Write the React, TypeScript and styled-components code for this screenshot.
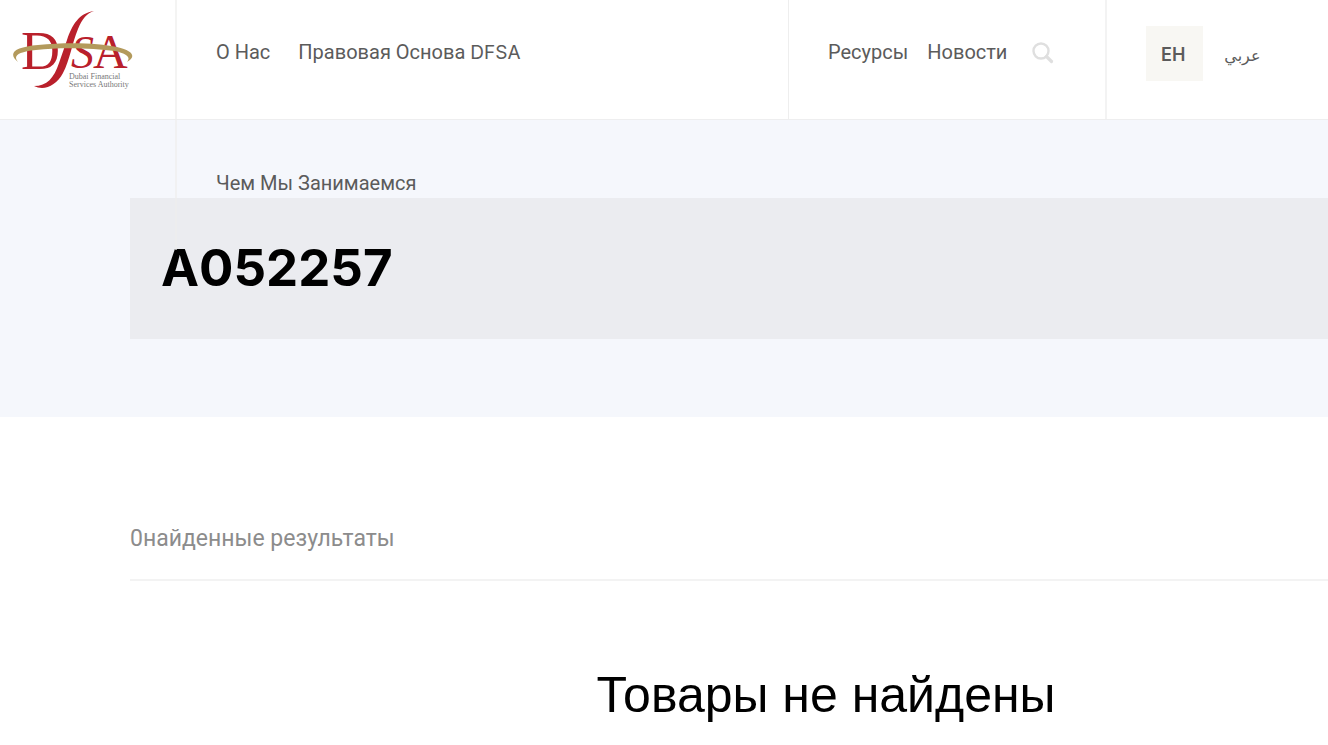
import React from "react";
import styled, { createGlobalStyle } from "styled-components";

const GlobalStyle = createGlobalStyle`
  *, *::before, *::after { box-sizing: border-box; }
  body {
    margin: 0;
    background: #fff;
    color: #000;
    font-family: Roboto, "Liberation Sans", sans-serif;
    overflow-x: hidden;
  }
`;

const Header = styled.header`
  display: grid;
  grid-template-columns: 175px minmax(0, 1fr) 317px 223px;
  grid-template-rows: 119px;
  height: 120px;
  border-bottom: 1px solid #eeeeef;
`;

const LogoLink = styled.a`
  display: block;
  padding: 8px 12px;
`;

const LogoSvg = styled.svg`
  display: block;
  width: 122px;
  height: 84px;
`;

const MainNav = styled.nav`
  position: relative;
  z-index: 1;
  display: flex;
  flex-wrap: wrap;
  align-content: flex-start;
  gap: 104px 28px;
  height: 250px;
  padding: 39px 0 0 39px;
  border-left: 2px solid rgba(238, 238, 236, 0.65);
`;

const SideNav = styled.nav`
  display: flex;
  align-items: flex-start;
  gap: 19px;
  padding: 39px 0 0 39px;
  border-left: 1px solid #eeeeee;
`;

const NavLink = styled.a<{ $ownRow?: boolean }>`
  flex-basis: ${(p) => (p.$ownRow ? "100%" : "auto")};
  color: #5b5b5b;
  font-size: 20px;
  line-height: 26px;
  text-decoration: none;
  white-space: nowrap;
`;

const Latin = styled.span`
  font-family: Inter, sans-serif;
  font-size: 19px;
`;

const SearchButton = styled.button`
  display: flex;
  margin: 3px 0 0 6px;
  padding: 0;
  border: 0;
  background: none;
  color: #dfdfdf;
  cursor: pointer;
`;

const Languages = styled.div`
  display: flex;
  align-items: flex-start;
  gap: 21px;
  padding: 26px 0 0 39px;
  border-left: 2px solid #f3f3f3;
`;

const LanguageButton = styled.button<{ $active?: boolean }>`
  height: 55px;
  padding: ${(p) => (p.$active ? "2px 18px 0 15px" : "2px 0 0")};
  border: 0;
  background: ${(p) => (p.$active ? "#f8f7f3" : "transparent")};
  color: #5b5b5b;
  font-family: Inter, "DejaVu Sans", sans-serif;
  font-size: ${(p) => (p.$active ? "18px" : "16px")};
  font-weight: ${(p) => (p.$active ? 600 : 400)};
  cursor: pointer;
`;

const Hero = styled.section`
  padding: 78px 0 78px 130px;
  background: #f5f7fc;
`;

const TitlePanel = styled.div`
  padding: 38px 31px 39px;
  background: #ebecf0;
`;

const Title = styled.h1`
  margin: 0;
  font-family: Inter, sans-serif;
  font-size: 51px;
  font-weight: 700;
  line-height: 64px;
`;

const Results = styled.main`
  padding: 106px 0 0 130px;
`;

const ResultCount = styled.p`
  margin: 0;
  padding-bottom: 24px;
  border-bottom: 2px solid #f3f3f3;
  color: #8c8c8c;
  font-size: 23px;
  line-height: 32px;
`;

const EmptyMessage = styled.h2`
  margin: 0;
  padding: 82px 0 16px 194px;
  font-family: "Liberation Sans", sans-serif;
  font-size: 50px;
  font-weight: 400;
  line-height: 64px;
  text-align: center;
`;

function Logo() {
  return (
    <LogoSvg viewBox="12 8 122 84" role="img" aria-label="DFSA">
      <g fill="#b9202b" fontFamily="Liberation Serif, serif">
        <text x="21" y="69" fontSize="54">D</text>
        <text x="71" y="68" fontSize="46" fontStyle="italic">S</text>
        <text x="93" y="68" fontSize="48">A</text>
      </g>
      <path
        d="M94 11 C79 13 72 25 67 40 L59 63 C54 78 47 86 34 86 C44 91 56 86 63 73 C70 60 72 43 78 29 C82 19 87 13 94 11 Z"
        fill="#b9202b"
      />
      <path
        d="M18 62 C7 53 15 47 38 45 C67 42 99 43 117 47 C134 51 136 57 127 62 C131 57 127 54 115 51 C93 48 60 47 36 50 C17 52 13 56 18 62 Z"
        fill="#b39a5c"
      />
      <g fill="#777" fontFamily="Liberation Serif, serif" fontSize="8">
        <text x="69" y="79">Dubai Financial</text>
        <text x="69" y="87">Services Authority</text>
      </g>
    </LogoSvg>
  );
}

function SearchIcon() {
  return (
    <svg width="22" height="22" viewBox="0 0 22 22" fill="none" stroke="currentColor" aria-hidden="true">
      <circle cx="9" cy="9" r="7.5" strokeWidth="2.4" />
      <path d="M14.5 14.5 L19.5 19.5" strokeWidth="3.2" strokeLinecap="round" />
    </svg>
  );
}

export default function App() {
  return (
    <>
      <GlobalStyle />
      <Header>
        <LogoLink href="#">
          <Logo />
        </LogoLink>
        <MainNav>
          <NavLink href="#">О Нас</NavLink>
          <NavLink href="#">
            Правовая Основа <Latin>DFSA</Latin>
          </NavLink>
          <NavLink href="#" $ownRow>Чем Мы Занимаемся</NavLink>
        </MainNav>
        <SideNav>
          <NavLink href="#">Ресурсы</NavLink>
          <NavLink href="#">Новости</NavLink>
          <SearchButton type="button" aria-label="Поиск">
            <SearchIcon />
          </SearchButton>
        </SideNav>
        <Languages>
          <LanguageButton type="button" $active>ЕН</LanguageButton>
          <LanguageButton type="button" lang="ar">عربي</LanguageButton>
        </Languages>
      </Header>
      <Hero>
        <TitlePanel>
          <Title>A052257</Title>
        </TitlePanel>
      </Hero>
      <Results>
        <ResultCount>0найденные результаты</ResultCount>
        <EmptyMessage>Товары не найдены</EmptyMessage>
      </Results>
    </>
  );
}
